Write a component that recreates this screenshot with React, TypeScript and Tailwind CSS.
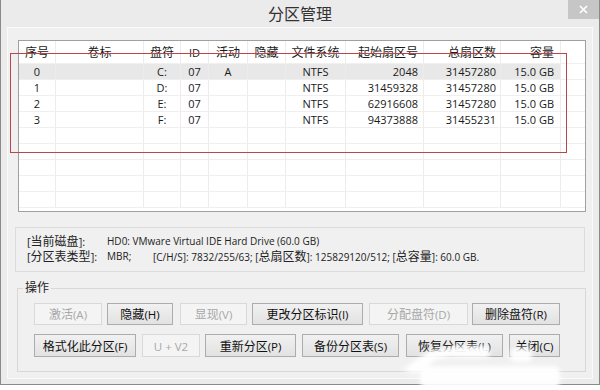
import React from "react";

const CJK_RE = /([\u3000-\u9fff\uff00-\uffef]+)/;
const IS_CJK = /[\u3000-\u9fff\uff00-\uffef]/;

function Mixed({ text, cjk, lat }: { text: string; cjk: string; lat: string }) {
  const parts = text.split(CJK_RE).filter((p) => p.length > 0);
  return (
    <span className="whitespace-nowrap">
      {parts.map((p, i) => (
        <span key={i} className={IS_CJK.test(p) ? cjk : lat}>
          {p}
        </span>
      ))}
    </span>
  );
}

function Btn({ label, cls, disabled }: { label: string; cls: string; disabled?: boolean }) {
  const base = disabled
    ? "border border-[#d9d9d9] bg-[#f4f4f4] text-[#a8a8a8]"
    : "border border-[#acacac] bg-linear-to-b from-[#f1f1f1] to-[#e2e2e2] text-[#111]";
  return (
    <div className={`flex shrink-0 items-center justify-center leading-[14px] ${base} ${cls}`}>
      <Mixed text={label} cjk="text-[12px]" lat="text-[11.5px]" />
    </div>
  );
}

const cols = [
  { w: "w-[37px]", a: "justify-center", pad: "" },
  { w: "w-[88px]", a: "justify-center", pad: "" },
  { w: "w-[37px]", a: "justify-center", pad: "" },
  { w: "w-[28px]", a: "justify-center", pad: "" },
  { w: "w-[39px]", a: "justify-center", pad: "" },
  { w: "w-[38px]", a: "justify-center", pad: "" },
  { w: "w-[60px]", a: "justify-center", pad: "" },
  { w: "w-[78px]", a: "justify-end", pad: "pr-[5px]" },
  { w: "w-[77px]", a: "justify-end", pad: "pr-[4px]" },
  { w: "w-[60px]", a: "justify-end", pad: "pr-[6px]" },
];

const header = ["序号", "卷标", "盘符", "ID", "活动", "隐藏", "文件系统", "起始扇区号", "总扇区数", "容量"];
const rows: string[][] = [
  ["0", "", "C:", "07", "A", "", "NTFS", "2048", "31457280", "15.0 GB"],
  ["1", "", "D:", "07", "", "", "NTFS", "31459328", "31457280", "15.0 GB"],
  ["2", "", "E:", "07", "", "", "NTFS", "62916608", "31457280", "15.0 GB"],
  ["3", "", "F:", "07", "", "", "NTFS", "94373888", "31455231", "15.0 GB"],
  ["", "", "", "", "", "", "", "", "", ""],
  ["", "", "", "", "", "", "", "", "", ""],
  ["", "", "", "", "", "", "", "", "", ""],
  ["", "", "", "", "", "", "", "", "", ""],
  ["", "", "", "", "", "", "", "", "", ""],
];

export default function App() {
  return (
    <div className="relative w-[600px] h-[390px] bg-white font-['Open_Sans','Noto_Sans_CJK_SC',sans-serif] text-[#1a1a1a] overflow-hidden">
      {/* window */}
      <div className="w-[600px] h-[385px] bg-[#ebebeb] border-x border-b border-[#8a8a8a] flex flex-col">
        {/* title bar */}
        <div className="relative h-[27px] shrink-0 flex items-center justify-center">
          <span className="text-[16px] text-[#333] font-['Noto_Sans_CJK_SC',sans-serif] leading-none mt-[-1px]">分区管理</span>
          <div className="absolute top-0 right-0 w-[31px] h-[19px] bg-[#c6c6c6] flex items-center justify-center">
            <svg width="9" height="9" viewBox="0 0 9 9">
              <path d="M1 1L8 8M8 1L1 8" stroke="#ffffff" strokeWidth="1.6" />
            </svg>
          </div>
        </div>
        {/* content panel */}
        <div className="mx-[6px] h-[352px] shrink-0 bg-[#f0f0f0] border border-[#fafafa] flex flex-col">
          {/* table */}
          <div className="ml-[10px] mt-[12px] w-[568px] h-[172px] shrink-0 border border-[#a0a0a0] bg-white overflow-hidden">
            <div className="flex h-[23px] border-b border-[#f0f0f0]">
              {header.map((h, i) => (
                <div key={i} className={`flex items-center h-full border-r border-[#ececec] leading-[14px] ${cols[i].w} ${cols[i].a} ${cols[i].pad}`}>
                  <Mixed text={h} cjk="text-[12px]" lat="text-[11px]" />
                </div>
              ))}
              <div className="flex-1" />
            </div>
            {rows.map((r, ri) => (
              <div key={ri} className="flex h-[16px] border-b border-[#efefef]">
                {r.map((c, ci) => (
                  <div
                    key={ci}
                    className={`flex items-center h-full border-r border-[#ececec] text-[11px] leading-none ${cols[ci].w} ${cols[ci].a} ${cols[ci].pad} ${ri === 0 ? "bg-[#e8e8e8]" : ""}`}
                  >
                    {c}
                  </div>
                ))}
                <div className="flex-1" />
              </div>
            ))}
          </div>
          {/* info box */}
          <div className="ml-[7px] mt-[15px] w-[570px] h-[45px] shrink-0 border border-[#dcdcdc] pl-[11px] pt-[6px] flex flex-col gap-[1px] text-[#222]">
            <div className="flex h-[14px] items-center leading-[14px] whitespace-nowrap">
              <span className="w-[80px] shrink-0"><Mixed text="[当前磁盘]:" cjk="text-[12px]" lat="text-[11px]" /></span>
              <span className="text-[10px]">HD0: VMware Virtual IDE Hard Drive (60.0 GB)</span>
            </div>
            <div className="flex h-[14px] items-center leading-[14px] whitespace-nowrap">
              <span className="w-[80px] shrink-0"><Mixed text="[分区表类型]:" cjk="text-[12px]" lat="text-[11px]" /></span>
              <span className="w-[46px] shrink-0 text-[10px]">MBR;</span>
              <Mixed text="[C/H/S]: 7832/255/63; [总扇区数]: 125829120/512; [总容量]: 60.0 GB." cjk="text-[12px]" lat="text-[10px]" />
            </div>
          </div>
          {/* operations group */}
          <fieldset className="ml-[9px] mt-[8px] w-[569px] shrink-0 border border-[#d8d8d8] pb-[14px] pt-[7px]">
            <legend className="ml-[5px] px-[2px] h-[16px] leading-[16px] text-[12px] text-[#222]">操作</legend>
            <div className="flex h-[22px] ml-[16px]">
              <Btn label="激活(A)" cls="w-[68px]" disabled />
              <Btn label="隐藏(H)" cls="ml-[5px] w-[66px]" />
              <Btn label="显现(V)" cls="ml-[7px] w-[67px]" disabled />
              <Btn label="更改分区标识(I)" cls="ml-[5px] w-[111px]" />
              <Btn label="分配盘符(D)" cls="ml-[6px] w-[99px]" disabled />
              <Btn label="删除盘符(R)" cls="ml-[4px] w-[88px]" />
            </div>
            <div className="flex h-[23px] mt-[9px] ml-[16px]">
              <Btn label="格式化此分区(F)" cls="w-[102px]" />
              <Btn label="U + V2" cls="ml-[6px] w-[58px]" disabled />
              <Btn label="重新分区(P)" cls="ml-[5px] w-[91px]" />
              <Btn label="备份分区表(S)" cls="ml-[6px] w-[97px]" />
              <Btn label="恢复分区表(L)" cls="ml-[7px] w-[97px]" />
              <Btn label="关闭(C)" cls="ml-[6px] w-[51px]" />
            </div>
          </fieldset>
        </div>
      </div>
      {/* red annotation rectangle */}
      <div className="absolute left-[10px] top-[53px] w-[557px] h-[100px] border border-[#b8474c] pointer-events-none" />
      {/* watermark */}
      <svg className="absolute left-[390px] top-[330px] pointer-events-none" width="180" height="60" viewBox="0 0 180 60">
        <defs>
          <filter id="wb" x="-20%" y="-50%" width="140%" height="200%">
            <feGaussianBlur stdDeviation="2" />
          </filter>
        </defs>
        <g fill="#ffffff" filter="url(#wb)" opacity="0.95">
          <polygon points="12,40 40,20 62,18 70,26 46,30 26,44" />
          <rect x="60" y="16" width="40" height="12" rx="5" />
          <rect x="120" y="18" width="22" height="14" rx="5" />
          <rect x="30" y="36" width="140" height="22" rx="6" />
        </g>
      </svg>
    </div>
  );
}
